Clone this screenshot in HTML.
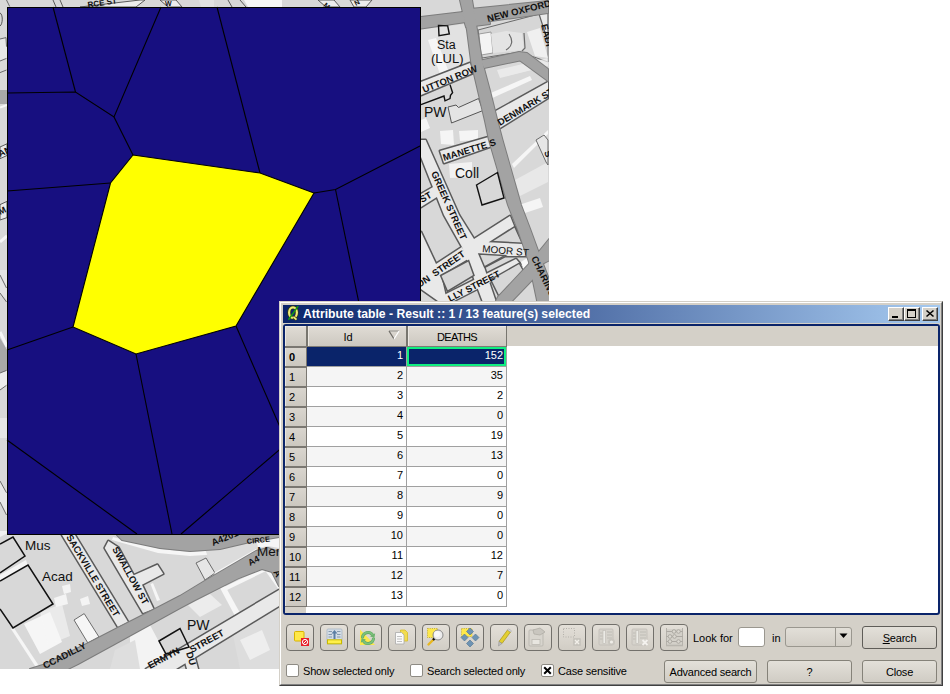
<!DOCTYPE html>
<html><head><meta charset="utf-8">
<style>
html,body{margin:0;padding:0;width:950px;height:694px;overflow:hidden;background:#fff;font-family:"Liberation Sans",sans-serif;}
.a{position:absolute;}
#dlg{position:absolute;left:279px;top:301px;width:664px;height:385px;background:#d4d0c8;box-sizing:border-box;
 border-top:1px solid #d4d0c8;border-left:1px solid #d4d0c8;border-right:1px solid #404040;border-bottom:1px solid #404040;}
#dlg .in{position:absolute;left:0;top:0;right:0;bottom:0;border-top:1px solid #fff;border-left:1px solid #fff;border-right:1px solid #808080;border-bottom:1px solid #808080;}
.title{position:absolute;left:283px;top:305px;width:657px;height:18px;background:linear-gradient(to right,#0a246a,#a6caf0);}
.ttext{position:absolute;left:303px;top:306px;color:#fff;font-weight:bold;font-size:12.2px;line-height:16px;white-space:nowrap;}
.cb{position:absolute;top:307px;width:16px;height:14px;box-sizing:border-box;background:#d4d0c8;
 border-top:1px solid #fff;border-left:1px solid #fff;border-right:1px solid #404040;border-bottom:1px solid #404040;box-shadow:inset -1px -1px 0 #808080;}
.frame{position:absolute;left:283px;top:324px;width:657px;height:291px;box-sizing:border-box;border:2px solid #0a246a;background:#fff;border-radius:3px;}
.hd{position:absolute;top:326px;height:20px;box-sizing:border-box;background:linear-gradient(#dfdbd4,#ccc8c0);border-top:1px solid #ece9e3;border-left:1px solid #ece9e3;}
.ht{position:absolute;top:331px;font-size:11px;line-height:13px;color:#000;text-align:center;white-space:nowrap;}
.rh{position:absolute;left:285px;width:21px;box-sizing:border-box;background:linear-gradient(#d9d5ce,#cbc7bf);border-left:1px solid #e8e5df;border-top:1px solid #e0ddd6;}
.rn{position:absolute;left:289px;font-size:11px;line-height:13px;color:#000;white-space:nowrap;}
.cell{position:absolute;height:19px;}
.num{position:absolute;font-size:11px;line-height:13px;text-align:right;color:#000;white-space:nowrap;}
.tb{position:absolute;top:624px;width:28px;height:27px;box-sizing:border-box;border:1.5px solid #72706b;border-radius:4px;background:linear-gradient(#e3dfd8,#d1cdc5);}
.lbl{position:absolute;font-size:11px;line-height:13px;color:#000;white-space:nowrap;letter-spacing:-0.2px;}
.chk{position:absolute;top:664px;width:13px;height:13px;box-sizing:border-box;border:1px solid #8e8b84;border-radius:2px;background:#fff;}
.btn{position:absolute;box-sizing:border-box;border:1px solid #858279;border-radius:3px;background:linear-gradient(#e3e0d9,#d0ccc4);font-size:11px;text-align:center;color:#000;letter-spacing:-0.2px;white-space:nowrap;}
</style></head><body>
<svg class="a" style="left:0;top:0" width="549" height="669" viewBox="0 0 549 669">
<rect x="0" y="0" width="549" height="669" fill="#d8d8d8"/>
<!-- top strip details -->
<path d="M53 0 L56 7 M60 0 L63 7" stroke="#5a5a5a" stroke-width="1"/>
<path d="M80 7 L140 0 L145 0 L136 7 Z" fill="#ececec" stroke="#5a5a5a" stroke-width="1"/>
<text x="88" y="7.5" font-family="Liberation Sans" font-size="8" font-weight="bold" fill="#111" transform="rotate(-8 88 7.5)">RCE ST</text>
<path d="M160 0 L176 0 L182 7 L168 7 Z" fill="#ececec" stroke="#5a5a5a" stroke-width="1"/>
<text x="165" y="6" font-family="Liberation Sans" font-size="7" font-weight="bold" fill="#111">W</text>
<path d="M199 0 H214 V7 H201 Z" fill="#e2e2e2"/>
<path d="M228 0 L232 7 M240 0 L246 7" stroke="#5a5a5a" stroke-width="1"/>
<path d="M244 0 H282 V7 H248 Z" fill="#f6f6f6"/>
<path d="M318 0 L334 0 L340 7 L326 7 Z" fill="#ececec" stroke="#5a5a5a" stroke-width="1"/>
<path d="M350 0 L372 0 L366 7 L354 7 Z" fill="#ececec" stroke="#5a5a5a" stroke-width="1"/>
<text x="323" y="6" font-family="Liberation Sans" font-size="7" font-weight="bold" fill="#111" transform="rotate(40 323 6)">M</text>
<text x="356" y="6" font-family="Liberation Sans" font-size="7" font-weight="bold" fill="#111" transform="rotate(-30 356 6)">N</text>
<!-- left strip -->
<path d="M0 39 L6 37.6 L7 47 L7 58.4 L0 61 Z" fill="#e6e6e6"/>
<path d="M0 39 L6 37.6 L6.5 46.7 M0 61 L6.5 58.4 M0 72.6 L6.5 70 M6.5 0 L9.7 6.5" fill="none" stroke="#6a6a6a" stroke-width="1"/>
<path d="M0 13 C3 14 3 24 0 26" fill="none" stroke="#555" stroke-width="1"/>
<path d="M0 90 H7 V104 H0 Z" fill="#a8a8a8"/>
<path d="M0 107.5 L7 105" stroke="#f6f6f6" stroke-width="2"/>
<path d="M0 147 L7 143.8 L7 155.5 L0 158.7 Z" fill="#ececec" stroke="#5a5a5a" stroke-width="1"/>
<text x="0" y="157" font-family="Liberation Sans" font-size="9" font-weight="bold" fill="#111" transform="rotate(-25 0 157)">AN</text>
<path d="M0 204.6 L7 201.4 L7 217.6 L0 220 Z" fill="#ececec" stroke="#5a5a5a" stroke-width="1"/>
<text x="0" y="215" font-family="Liberation Sans" font-size="9" font-weight="bold" fill="#111" transform="rotate(-25 0 215)">M</text>
<path d="M0 242 L7 235.8" stroke="#f6f6f6" stroke-width="3"/>
<path d="M0 270 H7 V300 L0 293 Z" fill="#e4e4e4"/>
<path d="M0 275 L6.5 288 M0 293 L6.5 302" stroke="#6a6a6a" stroke-width="1"/>
<path d="M0 332 L7 346.5" stroke="#f6f6f6" stroke-width="3"/>
<path d="M0 338 L7 350 L7 372 L0 373 Z" fill="#a8a8a8"/>
<path d="M0 373 L7 370.4 L7 385.3 L0 390 Z" fill="#ececec"/>
<path d="M0 373 L6.5 370.4 M0 390 L6.5 385.3" stroke="#6a6a6a" stroke-width="1"/>
<path d="M0 418 H7 V438 H0 Z" fill="#e6e6e6"/>
<path d="M0 481 L7 493 L7 515 L0 502 Z" fill="#e8e8e8"/>
<path d="M0 481 L6.5 492.8 M0 502 L6.5 515" stroke="#6a6a6a" stroke-width="1"/>
<!-- ===== Region C (right of voronoi) ===== -->
<!-- light patches -->
<path d="M440 27 L466 24 L471 62 L421 84 L421 30 Z" fill="#e2e2e2"/>
<path d="M428 40 L436 38 L448 70 L440 74 Z" fill="#f6f6f6"/>
<path d="M478 30 L543 13 L548 30 L548 62 L520 52 L482 58 Z" fill="#d6d6d6" stroke="#6a6a6a" stroke-width="1"/>
<path d="M479 34 L491 32 L493 53 L481 55 Z" fill="#f4f4f4" stroke="#8a8a8a" stroke-width="0.8"/>
<path d="M491 34 L506 31 L522 33 L524 50 L493 53 Z" fill="#e4e4e4"/>
<path d="M509 34 C 513 40 513 46 506 50" fill="none" stroke="#6a6a6a" stroke-width="1.2"/>
<path d="M524 33 L525 48 L522 51" fill="none" stroke="#6a6a6a" stroke-width="1.2"/>
<path d="M527 32 L540 28 L548 58 L535 56 Z" fill="#f0f0f0"/>
<path d="M539 14 L548 12 L548 42 Z" fill="#e9e9e9" stroke="#606060" stroke-width="1.2"/>
<path d="M497 70 L548 58 L548 66 L500 78 Z" fill="#f2f2f2" opacity="0.7"/>
<path d="M486 95 L530 76 L532 80 L488 100 Z" fill="#f6f6f6"/>
<!-- PW building -->
<path d="M448 107 L456 105 L458.5 107.5 L478.5 98.5 L483 110.5 L451.5 123 Z" fill="#e4e4e4" stroke="#555" stroke-width="1"/>
<path d="M421 104.6 L444 96 L445 100.8 L450 98.6 L450.5 95.4 L452.6 92.7 L450 84.6" fill="none" stroke="#111" stroke-width="1.4"/>
<path d="M440 131 L453 130 L454 145 L441 144 Z M459 131 L478 130 L478 140 L460 141 Z" fill="#f5f5f5"/>
<path d="M421 120 L426 118 L430 128 L421 132 Z" fill="#f5f5f5"/>
<path d="M449 164 L472 162 L472 177 L450 178 Z" fill="#f2f2f2"/>
<path d="M512 164 L548 130 L548 134 L514 168 Z" fill="#f6f6f6"/>
<path d="M515 180 L548 162 L548 182 L520 196 Z" fill="#e8e8e8"/>
<path d="M519 205 L540 198 L543 207 L522 214 Z" fill="#f5f5f5"/>
<path d="M536 140 L544 135 L548 140 L548 165 L546 162 Z" fill="#e6e6e6" stroke="#6a6a6a" stroke-width="1"/>

<!-- minor streets (light with outline) -->
<g fill="#5a5a5a" stroke="#5a5a5a" stroke-width="3" stroke-linejoin="round">
<path d="M421 82 L470 63 L473 73 L421 95 Z"/>
<path d="M494 112 L548 82 L548 98 L500 128 Z"/>
<path d="M440 151 L492 136 L495 145 L444 163 Z"/>
<path d="M421 140 L425.6 140 L459 215 L474 239 L510 216 L514 226 L525 244 L527 256 L505 256 L484 267 L497 305 L484 305 L462 247 L444 215 L421 157 Z"/>
<path d="M421 194 L434 186.5 L438.5 196 L421 207 Z"/>
<path d="M421 232 L436 264 L462 247 L468 259 L441 275 L447 301 L438 301 L421 289 Z"/>
<path d="M438 298 L516 259 L522 266 L446 305 L438 305 Z"/>
</g><g fill="#e9e9e9" stroke="none">
<path d="M421 82 L470 63 L473 73 L421 95 Z"/>
<path d="M494 112 L548 82 L548 98 L500 128 Z"/>
<path d="M440 151 L492 136 L495 145 L444 163 Z"/>
<path d="M421 140 L425.6 140 L459 215 L474 239 L510 216 L514 226 L525 244 L527 256 L505 256 L484 267 L497 305 L484 305 L462 247 L444 215 L421 157 Z"/>
<path d="M421 194 L434 186.5 L438.5 196 L421 207 Z"/>
<path d="M421 232 L436 264 L462 247 L468 259 L441 275 L447 301 L438 301 L421 289 Z"/>
<path d="M438 298 L516 259 L522 266 L446 305 L438 305 Z"/>
</g>
<g fill="#d8d8d8" stroke="#5a5a5a" stroke-width="1.5">
<path d="M491 241.6 L514.7 226.5 L522.3 243.2 Z"/>
<path d="M479 254 L505 255.6 L484.5 267 Z"/>
<path d="M440.6 275.5 L468.6 260.5 L474 275.5 L447.4 291.3 Z"/>
<path d="M490.5 279.6 L519.3 263.2 L526 275 L498.7 296 Z"/>
</g>
<path d="M521 262 L530 256 L533 268 L524 272 Z" fill="#f8f8f8"/>
<!-- main grey roads -->
<g fill="#7c7c7c" stroke="#7c7c7c" stroke-width="2" stroke-linejoin="round">
<path d="M421 17 L463 12 L466 22 L421 28.5 Z"/>
<path d="M470 9 L548 1 L548 13 L484 22 Z"/>
<path d="M462 12 L488 12 L490 24 L466 27 Z"/>
<path d="M481 60.5 L519 52 L527 53 L548 69 L548 81 L520 60.5 L484 68 Z"/>
<path d="M460 0 L467 30 L471 61 L478 91 L485 121 L489 140 L508 205 L518 230 L529 262 L538 305 L550 305 L550 282 L540 256 L530.5 230 L521 205 L502.5 140 L497.5 121 L490 91 L482 61 L477 30 L472 0 Z"/>
<path d="M494 305 L498 297 L529 264 L537 254 L550 238 L550 260 L540 265 L535 277 L511 302 L508 305 Z"/>
</g><g fill="#a3a3a3" stroke="none">
<path d="M421 17 L463 12 L466 22 L421 28.5 Z"/>
<path d="M470 9 L548 1 L548 13 L484 22 Z"/>
<path d="M462 12 L488 12 L490 24 L466 27 Z"/>
<path d="M481 60.5 L519 52 L527 53 L548 69 L548 81 L520 60.5 L484 68 Z"/>
<path d="M460 0 L467 30 L471 61 L478 91 L485 121 L489 140 L508 205 L518 230 L529 262 L538 305 L550 305 L550 282 L540 256 L530.5 230 L521 205 L502.5 140 L497.5 121 L490 91 L482 61 L477 30 L472 0 Z"/>
<path d="M494 305 L498 297 L529 264 L537 254 L550 238 L550 260 L540 265 L535 277 L511 302 L508 305 Z"/>
</g>
<!-- building outlines -->
<g fill="none" stroke="#111" stroke-width="1.4">
<path d="M438.5 25.4 L447.7 25.9 L449.3 34 L439 35.6 Z"/>
<path d="M476.5 185 L497.5 172.5 L504 198 L482 205 Z"/>
</g>
<!-- labels C -->
<g font-family="Liberation Sans" fill="#111">
<text x="437" y="49" font-size="12.5">Sta</text>
<text x="431" y="63" font-size="13">(LUL)</text>
<text x="424" y="116.5" font-size="14">PW</text>
<text x="455" y="178" font-size="14">Coll</text>
<text x="482" y="252" font-size="10" transform="rotate(5 482 252)">MOOR ST</text>
</g>
<g font-family="Liberation Sans" fill="#111" font-size="9.5" font-weight="bold">
<text x="488" y="22" transform="rotate(-14 488 22)">NEW  OXFORD</text>
<text x="424" y="93" transform="rotate(-22 424 93)">UTTON ROW</text>
<text x="500" y="126" transform="rotate(-31 500 126)">DENMARK ST</text>
<text x="444" y="161" transform="rotate(-17 444 161)">MANETTE S</text>
<text x="431" y="173" transform="rotate(66 431 173)">GREEK STREET</text>
<text x="422" y="203" transform="rotate(-30 422 203)">ST</text>
<text x="435" y="277" transform="rotate(-35 435 277)">STREET</text>
<text x="419" y="288" transform="rotate(-33 419 288)">ON</text>
<text x="450" y="302" transform="rotate(-27 450 302)">LLY STREET</text>
<text x="531" y="258" transform="rotate(64 531 258)">CHARING</text>
<text x="544" y="152" transform="rotate(70 544 152)">S</text>
<text x="541" y="25" transform="rotate(76 541 25)">EADI</text>
</g>

<!-- ===== Region D (below voronoi) ===== -->
<path d="M0 535 H279 V669 H0 Z" fill="#d8d8d8"/>
<!-- white/light patches -->
<path d="M24 624 L50 612 L62 642 L40 654 Z" fill="#f6f6f6"/>
<path d="M40 612 L62 604 L70 636 L48 645 Z" fill="#f6f6f6" opacity="0.6"/>
<path d="M54 598 L66 594 L68 604 L56 607 Z M62 586 L70 584 L71 592 L64 594 Z M80 599 L88 596 L90 604 L82 606 Z" fill="#f4f4f4"/>
<path d="M74 620 L84.2 613.6 L99 637 L87.9 643 Z" fill="#f6f6f6" stroke="#6c6c6c" stroke-width="1"/>
<path d="M0 575 L26 560 L28 566 L0 581 Z" fill="#f4f4f4"/>
<path d="M11 629 L14 628 L41 669 L37 669 Z" fill="#f6f6f6"/>
<path d="M0 531 L12 531 L0 537 Z" fill="#f0f0f0"/>
<!-- curve band white -->
<path d="M113 537 L160 549 L190 552 L220 550 L250 543 L279 538 L279 542 L250 547 L220 554 L190 556 L158 553 L112 540 Z" fill="#f6f6f6"/>
<path d="M205 549 L254 535 L262 549 L214 573 Z" fill="#dcdcdc"/>
<path d="M196 563 L206 558 L215 573 L205 580 Z" fill="#e6e6e6" stroke="#6c6c6c" stroke-width="1"/>
<path d="M256 536 L279 535 L279 548 L268 546 L258 548 Z" fill="#f6f6f6"/>
<path d="M214 573 L256 549 L258 551 L216 576 Z" fill="#f6f6f6"/>
<path d="M222 588 L264 568 L266 571 L225 591 Z" fill="#f6f6f6"/>
<path d="M219 586 L224 584 L240 613 L235 616 Z" fill="#f6f6f6"/>
<path d="M264 569 L268 568 L279 585 L279 590 Z" fill="#f6f6f6"/>
<path d="M130 636 L150 625 L158 640 L165 654 L175 669 L130 669 Z" fill="#f3f3f3"/>
<path d="M115 650 L135 640 L140 669 L110 669 Z" fill="#dedede"/>
<path d="M230 620 L279 596 L279 669 L240 669 Z" fill="#dddddd"/>
<path d="M240 640 L262 630 L270 650 L250 660 Z" fill="#eeeeee"/>
<path d="M188 605 L210 594 L222 605 L200 617 Z" fill="#ececec"/>
<!-- light streets D -->
<g fill="#5a5a5a" stroke="#5a5a5a" stroke-width="3" stroke-linejoin="round">
<path d="M62 535 L75 535 L128 622 L118 627 Z"/>
<path d="M104.7 548 L108.4 541 L118.4 547.4 L133.7 575.3 L157.4 564.7 L163.2 573.7 L142 584.7 L153.5 609 L143 613 Z"/>
<path d="M146 669 L279 590 L279 606 L176 669 Z"/>
<path d="M182 651 L192 647 L198 669 L187 669 Z"/>
</g><g fill="#e9e9e9" stroke="none">
<path d="M62 535 L75 535 L128 622 L118 627 Z"/>
<path d="M104.7 548 L108.4 541 L118.4 547.4 L133.7 575.3 L157.4 564.7 L163.2 573.7 L142 584.7 L153.5 609 L143 613 Z"/>
<path d="M146 669 L279 590 L279 606 L176 669 Z"/>
<path d="M182 651 L192 647 L198 669 L187 669 Z"/>
</g>
<path d="M150.5 584 L153 583 L160 600 L157 601 Z" fill="#f6f6f6"/>
<!-- grey roads D -->
<g fill="#7c7c7c" stroke="#7c7c7c" stroke-width="2" stroke-linejoin="round">
<path d="M30 669 L46 664 L88.6 643 L119.6 627 L155 609 L180 596 L203 582 L256 551 L268 548 L279 552 L279 586 L272 572 L262 569 L238 578.4 L195 600 L180 608 L113.7 644.5 L78 664 L68 669 Z"/>
<path d="M117 535 L279 535 L279 537 L250 542 L220 549 L190 551 L160 548 L122 540 Z"/>
</g><g fill="#a3a3a3" stroke="none">
<path d="M30 669 L46 664 L88.6 643 L119.6 627 L155 609 L180 596 L203 582 L256 551 L268 548 L279 552 L279 586 L272 572 L262 569 L238 578.4 L195 600 L180 608 L113.7 644.5 L78 664 L68 669 Z"/>
<path d="M117 535 L279 535 L279 537 L250 542 L220 549 L190 551 L160 548 L122 540 Z"/>
</g>
<!-- building outlines D -->
<g fill="none" stroke="#111" stroke-width="1.5">
<path d="M0 544 L13 537 L25 556 L0 573"/>
<path d="M0 581 L28 565 L53 604 L13 628 L0 609"/>
<path d="M159 641 L180 628.5 L189 647 L166 654 Z"/>
</g>
<g font-family="Liberation Sans" fill="#111">
<text x="25" y="549.5" font-size="13.5">Mus</text>
<text x="42" y="581" font-size="13.5">Acad</text>
<text x="187" y="630" font-size="14">PW</text>
<text x="257" y="556" font-size="13.5">Mer</text>
</g>
<g font-family="Liberation Sans" fill="#111" font-size="9.5" font-weight="bold">
<text x="66" y="537" transform="rotate(59 66 537)">SACKVILLE STREET</text>
<text x="112" y="549" transform="rotate(61 112 549)">SWALLOW ST</text>
<text x="45" y="669" transform="rotate(-27 45 669)">CCADILLY</text>
<text x="150" y="669" transform="rotate(-28 150 669)">ERMYN</text>
<text x="194" y="631" transform="rotate(-28 194 631)" dy="0"></text>
<text x="192" y="653" transform="rotate(-29 192 653)">STREET</text>
<text x="186" y="653" transform="rotate(72 186 653)">DU</text>
<text x="213" y="546" transform="rotate(-22 213 546)">A4201</text>
<text x="247" y="544" font-size="7.5" transform="rotate(-6 247 544)">CIRCE</text>
<text x="250" y="566" font-size="9" transform="rotate(-28 250 566)">A4</text>
<text x="273" y="572" transform="rotate(60 273 572)">A</text>
</g>

</svg>
<svg class="a" style="left:0;top:0" width="430" height="545" viewBox="0 0 430 545">
<rect x="7.5" y="7.5" width="413" height="527" fill="#170f80" stroke="#000" stroke-width="1"/>
<g stroke="#000" stroke-width="1.1" fill="none">
<polyline points="53,7 75.5,92"/>
<polyline points="7,93 75.5,92 114,117 161,7"/>
<polyline points="114,117 133,155"/>
<polyline points="7,191 110.5,183"/>
<polyline points="217,7 260,173"/>
<polyline points="314,193 335.5,189.5 420,146"/>
<polyline points="335.5,189.5 380,405"/>
<polyline points="73,327 7,350"/>
<polyline points="136,354 172,534"/>
<polyline points="7,440 137,534"/>
<polyline points="181,534 420,329.6"/>
<polyline points="236,326 300,473"/>
</g>
<polygon points="133,155 260,173 314,193 236,326 136,354 73,327 110.5,183" fill="#ffff00" stroke="#000" stroke-width="1.1"/>
</svg>
<div id="dlg"><div class="in"></div></div>
<div class="title"></div>
<svg class="a" style="left:287px;top:305px" width="14" height="16" viewBox="0 0 14 16">
<ellipse cx="6" cy="7.6" rx="3.9" ry="5.3" fill="none" stroke="#3a3a08" stroke-width="3.4"/>
<ellipse cx="6" cy="7.6" rx="3.9" ry="5.3" fill="none" stroke="#ecec7a" stroke-width="2.2"/>
<path d="M6.5 12 L9.5 14.6" stroke="#3a3a08" stroke-width="3"/>
<path d="M6.5 12 L9.5 14.6" stroke="#ecec7a" stroke-width="1.8"/>
<path d="M1.8 14.2 L10.8 1.6" stroke="#159a10" stroke-width="1.5" stroke-linecap="round"/>
</svg>
<div class="ttext">Attribute table - Result :: 1 / 13 feature(s) selected</div>
<div class="cb" style="left:888px"></div><div class="cb" style="left:904px"></div><div class="cb" style="left:922px"></div>
<div class="a" style="left:892px;top:316px;width:6px;height:2px;background:#000"></div>
<div class="a" style="left:907px;top:309px;width:9px;height:9px;box-sizing:border-box;border:1px solid #000;border-top-width:2px"></div>
<svg class="a" style="left:925px;top:309px" width="10" height="9" viewBox="0 0 10 9"><path d="M1.5 1.5 L8.5 7.5 M8.5 1.5 L1.5 7.5" stroke="#000" stroke-width="1.6"/></svg>
<div class="frame"></div>
<div class="hd" style="left:285px;width:21px"></div>
<div class="a" style="left:306px;top:326px;width:2px;height:21px;background:#78766f"></div>
<div class="hd" style="left:308px;width:98px"></div>
<div class="a" style="left:406px;top:326px;width:2px;height:21px;background:#78766f"></div>
<div class="hd" style="left:408px;width:98px"></div>
<div class="a" style="left:506px;top:326px;width:1px;height:21px;background:#78766f"></div>
<div class="a" style="left:507px;top:326px;width:431px;height:20px;background:#d4d0c8"></div>
<div class="a" style="left:285px;top:346px;width:221px;height:1px;background:#7e7b75"></div>
<div class="ht" style="left:308px;width:80px">Id</div>
<svg class="a" style="left:388px;top:330px" width="12" height="10" viewBox="0 0 12 10"><path d="M1 1 H11" stroke="#a3a19c" stroke-width="1.3"/><path d="M1 1 L6 9" stroke="#6d6b66" stroke-width="1.2"/><path d="M11 1 L6 9" stroke="#ffffff" stroke-width="1.2"/></svg>
<div class="ht" style="left:408px;width:98px;letter-spacing:-0.6px">DEATHS</div>
<div class="rh" style="top:347px;height:20px"></div><div class="cell" style="left:307px;top:347px;width:99px;background:#0a246a"></div><div class="cell" style="left:407px;top:347px;width:99px;background:#0a246a"></div><div class="rh" style="top:367px;height:20px"></div><div class="cell" style="left:307px;top:367px;width:99px;background:#f5f5f5"></div><div class="cell" style="left:407px;top:367px;width:99px;background:#f5f5f5"></div><div class="rh" style="top:387px;height:20px"></div><div class="cell" style="left:307px;top:387px;width:99px;background:#ffffff"></div><div class="cell" style="left:407px;top:387px;width:99px;background:#ffffff"></div><div class="rh" style="top:407px;height:20px"></div><div class="cell" style="left:307px;top:407px;width:99px;background:#f5f5f5"></div><div class="cell" style="left:407px;top:407px;width:99px;background:#f5f5f5"></div><div class="rh" style="top:427px;height:20px"></div><div class="cell" style="left:307px;top:427px;width:99px;background:#ffffff"></div><div class="cell" style="left:407px;top:427px;width:99px;background:#ffffff"></div><div class="rh" style="top:447px;height:20px"></div><div class="cell" style="left:307px;top:447px;width:99px;background:#f5f5f5"></div><div class="cell" style="left:407px;top:447px;width:99px;background:#f5f5f5"></div><div class="rh" style="top:467px;height:20px"></div><div class="cell" style="left:307px;top:467px;width:99px;background:#ffffff"></div><div class="cell" style="left:407px;top:467px;width:99px;background:#ffffff"></div><div class="rh" style="top:487px;height:20px"></div><div class="cell" style="left:307px;top:487px;width:99px;background:#f5f5f5"></div><div class="cell" style="left:407px;top:487px;width:99px;background:#f5f5f5"></div><div class="rh" style="top:507px;height:20px"></div><div class="cell" style="left:307px;top:507px;width:99px;background:#ffffff"></div><div class="cell" style="left:407px;top:507px;width:99px;background:#ffffff"></div><div class="rh" style="top:527px;height:20px"></div><div class="cell" style="left:307px;top:527px;width:99px;background:#f5f5f5"></div><div class="cell" style="left:407px;top:527px;width:99px;background:#f5f5f5"></div><div class="rh" style="top:547px;height:20px"></div><div class="cell" style="left:307px;top:547px;width:99px;background:#ffffff"></div><div class="cell" style="left:407px;top:547px;width:99px;background:#ffffff"></div><div class="rh" style="top:567px;height:20px"></div><div class="cell" style="left:307px;top:567px;width:99px;background:#f5f5f5"></div><div class="cell" style="left:407px;top:567px;width:99px;background:#f5f5f5"></div><div class="rh" style="top:587px;height:20px"></div><div class="cell" style="left:307px;top:587px;width:99px;background:#ffffff"></div><div class="cell" style="left:407px;top:587px;width:99px;background:#ffffff"></div><div class="a" style="left:285px;top:346px;width:21px;height:2px;background:#7a7771"></div><div class="a" style="left:306px;top:347px;width:1px;height:20px;background:#7a7771"></div><div class="a" style="left:307px;top:366px;width:200px;height:1px;background:#a0a0a0"></div><div class="a" style="left:406px;top:347px;width:1px;height:20px;background:#a0a0a0"></div><div class="a" style="left:506px;top:347px;width:1px;height:20px;background:#a0a0a0"></div><div class="rn" style="top:351px;font-weight:bold;">0</div><div class="num" style="left:306px;top:349px;width:97px;color:#fff">1</div><div class="num" style="left:406px;top:349px;width:97px;color:#fff">152</div>
<div class="a" style="left:285px;top:366px;width:21px;height:2px;background:#7a7771"></div><div class="a" style="left:306px;top:367px;width:1px;height:20px;background:#7a7771"></div><div class="a" style="left:307px;top:386px;width:200px;height:1px;background:#a0a0a0"></div><div class="a" style="left:406px;top:367px;width:1px;height:20px;background:#a0a0a0"></div><div class="a" style="left:506px;top:367px;width:1px;height:20px;background:#a0a0a0"></div><div class="rn" style="top:371px;">1</div><div class="num" style="left:306px;top:369px;width:97px;color:#000">2</div><div class="num" style="left:406px;top:369px;width:97px;color:#000">35</div>
<div class="a" style="left:285px;top:386px;width:21px;height:2px;background:#7a7771"></div><div class="a" style="left:306px;top:387px;width:1px;height:20px;background:#7a7771"></div><div class="a" style="left:307px;top:406px;width:200px;height:1px;background:#a0a0a0"></div><div class="a" style="left:406px;top:387px;width:1px;height:20px;background:#a0a0a0"></div><div class="a" style="left:506px;top:387px;width:1px;height:20px;background:#a0a0a0"></div><div class="rn" style="top:391px;">2</div><div class="num" style="left:306px;top:389px;width:97px;color:#000">3</div><div class="num" style="left:406px;top:389px;width:97px;color:#000">2</div>
<div class="a" style="left:285px;top:406px;width:21px;height:2px;background:#7a7771"></div><div class="a" style="left:306px;top:407px;width:1px;height:20px;background:#7a7771"></div><div class="a" style="left:307px;top:426px;width:200px;height:1px;background:#a0a0a0"></div><div class="a" style="left:406px;top:407px;width:1px;height:20px;background:#a0a0a0"></div><div class="a" style="left:506px;top:407px;width:1px;height:20px;background:#a0a0a0"></div><div class="rn" style="top:411px;">3</div><div class="num" style="left:306px;top:409px;width:97px;color:#000">4</div><div class="num" style="left:406px;top:409px;width:97px;color:#000">0</div>
<div class="a" style="left:285px;top:426px;width:21px;height:2px;background:#7a7771"></div><div class="a" style="left:306px;top:427px;width:1px;height:20px;background:#7a7771"></div><div class="a" style="left:307px;top:446px;width:200px;height:1px;background:#a0a0a0"></div><div class="a" style="left:406px;top:427px;width:1px;height:20px;background:#a0a0a0"></div><div class="a" style="left:506px;top:427px;width:1px;height:20px;background:#a0a0a0"></div><div class="rn" style="top:431px;">4</div><div class="num" style="left:306px;top:429px;width:97px;color:#000">5</div><div class="num" style="left:406px;top:429px;width:97px;color:#000">19</div>
<div class="a" style="left:285px;top:446px;width:21px;height:2px;background:#7a7771"></div><div class="a" style="left:306px;top:447px;width:1px;height:20px;background:#7a7771"></div><div class="a" style="left:307px;top:466px;width:200px;height:1px;background:#a0a0a0"></div><div class="a" style="left:406px;top:447px;width:1px;height:20px;background:#a0a0a0"></div><div class="a" style="left:506px;top:447px;width:1px;height:20px;background:#a0a0a0"></div><div class="rn" style="top:451px;">5</div><div class="num" style="left:306px;top:449px;width:97px;color:#000">6</div><div class="num" style="left:406px;top:449px;width:97px;color:#000">13</div>
<div class="a" style="left:285px;top:466px;width:21px;height:2px;background:#7a7771"></div><div class="a" style="left:306px;top:467px;width:1px;height:20px;background:#7a7771"></div><div class="a" style="left:307px;top:486px;width:200px;height:1px;background:#a0a0a0"></div><div class="a" style="left:406px;top:467px;width:1px;height:20px;background:#a0a0a0"></div><div class="a" style="left:506px;top:467px;width:1px;height:20px;background:#a0a0a0"></div><div class="rn" style="top:471px;">6</div><div class="num" style="left:306px;top:469px;width:97px;color:#000">7</div><div class="num" style="left:406px;top:469px;width:97px;color:#000">0</div>
<div class="a" style="left:285px;top:486px;width:21px;height:2px;background:#7a7771"></div><div class="a" style="left:306px;top:487px;width:1px;height:20px;background:#7a7771"></div><div class="a" style="left:307px;top:506px;width:200px;height:1px;background:#a0a0a0"></div><div class="a" style="left:406px;top:487px;width:1px;height:20px;background:#a0a0a0"></div><div class="a" style="left:506px;top:487px;width:1px;height:20px;background:#a0a0a0"></div><div class="rn" style="top:491px;">7</div><div class="num" style="left:306px;top:489px;width:97px;color:#000">8</div><div class="num" style="left:406px;top:489px;width:97px;color:#000">9</div>
<div class="a" style="left:285px;top:506px;width:21px;height:2px;background:#7a7771"></div><div class="a" style="left:306px;top:507px;width:1px;height:20px;background:#7a7771"></div><div class="a" style="left:307px;top:526px;width:200px;height:1px;background:#a0a0a0"></div><div class="a" style="left:406px;top:507px;width:1px;height:20px;background:#a0a0a0"></div><div class="a" style="left:506px;top:507px;width:1px;height:20px;background:#a0a0a0"></div><div class="rn" style="top:511px;">8</div><div class="num" style="left:306px;top:509px;width:97px;color:#000">9</div><div class="num" style="left:406px;top:509px;width:97px;color:#000">0</div>
<div class="a" style="left:285px;top:526px;width:21px;height:2px;background:#7a7771"></div><div class="a" style="left:306px;top:527px;width:1px;height:20px;background:#7a7771"></div><div class="a" style="left:307px;top:546px;width:200px;height:1px;background:#a0a0a0"></div><div class="a" style="left:406px;top:527px;width:1px;height:20px;background:#a0a0a0"></div><div class="a" style="left:506px;top:527px;width:1px;height:20px;background:#a0a0a0"></div><div class="rn" style="top:531px;">9</div><div class="num" style="left:306px;top:529px;width:97px;color:#000">10</div><div class="num" style="left:406px;top:529px;width:97px;color:#000">0</div>
<div class="a" style="left:285px;top:546px;width:21px;height:2px;background:#7a7771"></div><div class="a" style="left:306px;top:547px;width:1px;height:20px;background:#7a7771"></div><div class="a" style="left:307px;top:566px;width:200px;height:1px;background:#a0a0a0"></div><div class="a" style="left:406px;top:547px;width:1px;height:20px;background:#a0a0a0"></div><div class="a" style="left:506px;top:547px;width:1px;height:20px;background:#a0a0a0"></div><div class="rn" style="top:551px;">10</div><div class="num" style="left:306px;top:549px;width:97px;color:#000">11</div><div class="num" style="left:406px;top:549px;width:97px;color:#000">12</div>
<div class="a" style="left:285px;top:566px;width:21px;height:2px;background:#7a7771"></div><div class="a" style="left:306px;top:567px;width:1px;height:20px;background:#7a7771"></div><div class="a" style="left:307px;top:586px;width:200px;height:1px;background:#a0a0a0"></div><div class="a" style="left:406px;top:567px;width:1px;height:20px;background:#a0a0a0"></div><div class="a" style="left:506px;top:567px;width:1px;height:20px;background:#a0a0a0"></div><div class="rn" style="top:571px;">11</div><div class="num" style="left:306px;top:569px;width:97px;color:#000">12</div><div class="num" style="left:406px;top:569px;width:97px;color:#000">7</div>
<div class="a" style="left:285px;top:586px;width:21px;height:2px;background:#7a7771"></div><div class="a" style="left:306px;top:587px;width:1px;height:20px;background:#7a7771"></div><div class="a" style="left:307px;top:606px;width:200px;height:1px;background:#a0a0a0"></div><div class="a" style="left:406px;top:587px;width:1px;height:20px;background:#a0a0a0"></div><div class="a" style="left:506px;top:587px;width:1px;height:20px;background:#a0a0a0"></div><div class="rn" style="top:591px;">12</div><div class="num" style="left:306px;top:589px;width:97px;color:#000">13</div><div class="num" style="left:406px;top:589px;width:97px;color:#000">0</div>
<div class="a" style="left:285px;top:606px;width:21px;height:2px;background:#7a7771"></div>
<div class="a" style="left:407px;top:347px;width:99px;height:19px;box-sizing:border-box;border:2px solid #10ee80"></div>
<div class="a" style="left:285px;top:607px;width:21px;height:6px;background:#d4d0c8"></div>
<div class="tb" style="left:286px"></div><div class="tb" style="left:320px"></div><div class="tb" style="left:354px"></div><div class="tb" style="left:388px"></div><div class="tb" style="left:422px"></div><div class="tb" style="left:456px"></div><div class="tb" style="left:490px"></div><div class="tb" style="left:524px"></div><div class="tb" style="left:558px"></div><div class="tb" style="left:592px"></div><div class="tb" style="left:626px"></div><div class="tb" style="left:660px"></div>
<svg class="a" style="left:286px;top:624px" width="28" height="27" viewBox="0 0 28 27">
<rect x="8.5" y="7.5" width="9.5" height="9.5" rx="1" fill="#ffe84a" stroke="#d9b400" stroke-width="1"/>
<rect x="15" y="14" width="8" height="8" fill="#e8202a"/>
<circle cx="19" cy="18" r="2.6" fill="none" stroke="#fff" stroke-width="1"/>
<path d="M17.2 19.8 L20.8 16.2" stroke="#fff" stroke-width="1"/>
</svg>
<svg class="a" style="left:320px;top:624px" width="28" height="27" viewBox="0 0 28 27">
<rect x="7" y="5" width="15" height="15" rx="1" fill="#d4dde6" stroke="#a7b6c4" stroke-width="0.8"/>
<path d="M8.5 7.5 H12 M17 7.5 H20.5 M8.5 10.5 H12 M17 10.5 H20.5 M8.5 13 H12 M17 13 H20.5" stroke="#7e93a8" stroke-width="0.9"/>
<path d="M14.5 6 L11.5 9.5 H13.5 V15 H15.5 V9.5 H17.5 Z" fill="#5c7fa3"/>
<rect x="7.5" y="15.8" width="14" height="4" fill="#fff04a" stroke="#c8b800" stroke-width="1"/>
</svg>
<svg class="a" style="left:354px;top:624px" width="28" height="27" viewBox="0 0 28 27">
<path d="M6 5.5 V21 H21 Z" fill="#fde84a"/>
<path d="M8.5 14 A5.5 5.5 0 0 1 18.76 11.25" fill="none" stroke="#5fa35f" stroke-width="3"/>
<path d="M8.5 14 A5.5 5.5 0 0 1 18.76 11.25" fill="none" stroke="#7cc27c" stroke-width="1.8"/>
<path d="M20.4 14.2 L21.2 9.2 L16 12.3 Z" fill="#6fb46f"/>
<path d="M19.5 14 A5.5 5.5 0 0 1 9.24 16.75" fill="none" stroke="#5fa35f" stroke-width="3"/>
<path d="M19.5 14 A5.5 5.5 0 0 1 9.24 16.75" fill="none" stroke="#7cc27c" stroke-width="1.8"/>
<path d="M7.6 13.8 L6.8 18.8 L12 15.7 Z" fill="#6fb46f"/>
</svg>
<svg class="a" style="left:388px;top:624px" width="28" height="27" viewBox="0 0 28 27">
<path d="M12.5 6 H17 L19.5 8.5 V17 H12.5 Z" fill="#f2dc50" stroke="#d6bd2a" stroke-width="0.8"/>
<path d="M7.5 8.5 H13.5 L16 11 V20 H7.5 Z" fill="#fafafa" stroke="#a9a9a9" stroke-width="0.8"/>
<path d="M9 12.5 H14 M9 15 H14 M9 17.5 H14" stroke="#a8a8a8" stroke-width="0.7"/>
</svg>
<svg class="a" style="left:422px;top:624px" width="28" height="27" viewBox="0 0 28 27">
<rect x="5.5" y="4.5" width="10" height="9" fill="#fde84a" stroke="#b49a00" stroke-width="0.7" stroke-dasharray="1,1.2"/>
<path d="M6.5 20.5 L11.5 15.5" stroke="#e8b820" stroke-width="2.4" stroke-linecap="round"/>
<path d="M11 16 L12.8 14.2" stroke="#111" stroke-width="2.4"/>
<circle cx="16" cy="11" r="5" fill="#ececec" stroke="#8a8a8a" stroke-width="1"/>
<circle cx="15" cy="10" r="3" fill="#f8f8f8"/>
</svg>
<svg class="a" style="left:456px;top:624px" width="28" height="27" viewBox="0 0 28 27">
<rect x="5.5" y="4.5" width="10.5" height="8" fill="#fde84a" stroke="#b49a00" stroke-width="0.7" stroke-dasharray="1,1.2"/>
<path d="M14 4 L17.5 7.5 L14 11 L10.5 7.5 Z M8.5 10 L12 13.5 L8.5 17 L5 13.5 Z M19.5 10 L23 13.5 L19.5 17 L16 13.5 Z M14 16 L17.5 19.5 L14 23 L10.5 19.5 Z" fill="#6d93b3" stroke="#4f7290" stroke-width="0.6"/>
</svg>
<svg class="a" style="left:490px;top:624px" width="28" height="27" viewBox="0 0 28 27">
<path d="M17.5 6 L20.5 8 L12 19.5 L9 17.5 Z" fill="#e3cf30" stroke="#a89418" stroke-width="0.7"/>
<path d="M17.5 6 L18.5 4.8 L21.5 6.8 L20.5 8 Z" fill="#dedede" stroke="#999" stroke-width="0.5"/>
<path d="M9 17.5 L12 19.5 L8.5 22 Z" fill="#c0c0c0" stroke="#8d8d8d" stroke-width="0.5"/>
</svg>
<svg class="a" style="left:524px;top:624px" width="28" height="27" viewBox="0 0 28 27">
<rect x="5" y="6" width="14" height="16" rx="1" fill="#d8d5ce" stroke="#bcb9b2" stroke-width="1"/>
<rect x="8" y="15.5" width="8" height="5" fill="#e8e6e0" stroke="#bcb9b2" stroke-width="0.8"/>
<path d="M9 6 L16 4 L21 8 L16 11 L10 10 Z" fill="#c9c6bf" stroke="#b0ada6" stroke-width="0.8"/>
</svg>
<svg class="a" style="left:558px;top:624px" width="28" height="27" viewBox="0 0 28 27">
<rect x="5.5" y="4.5" width="11" height="8.5" fill="none" stroke="#b4b1aa" stroke-width="1" stroke-dasharray="1,1.5"/>
<rect x="15" y="14" width="8" height="8" rx="1" fill="#c8c5be"/>
<path d="M17 16 L21 20 M21 16 L17 20" stroke="#f2f0ea" stroke-width="1.4"/>
</svg>
<svg class="a" style="left:592px;top:624px" width="28" height="27" viewBox="0 0 28 27">
<rect x="7" y="5" width="14" height="16" rx="1" fill="#d6d3cc" stroke="#c0bdb6" stroke-width="0.8"/>
<rect x="11" y="6.5" width="2.5" height="13" fill="#ecebe6" stroke="#bdbab3" stroke-width="0.6"/>
<path d="M8 9 H10.5 M8 12 H10.5 M8 15 H10.5 M15 8 H20 M15 11 H20 M15 14 H20" stroke="#bdbab3" stroke-width="0.9"/>
<circle cx="19.5" cy="18" r="3.5" fill="#c9c6bf"/>
<circle cx="19.5" cy="18" r="1.6" fill="#efede8"/>
</svg>
<svg class="a" style="left:626px;top:624px" width="28" height="27" viewBox="0 0 28 27">
<rect x="6" y="5" width="15" height="16" rx="1" fill="#d6d3cc" stroke="#c0bdb6" stroke-width="0.8"/>
<rect x="10" y="6.5" width="2.5" height="13" fill="#ecebe6" stroke="#bdbab3" stroke-width="0.6"/>
<path d="M7 9 H9.5 M7 12 H9.5 M7 15 H9.5 M14 8 H20 M14 11 H20 M14 14 H20" stroke="#bdbab3" stroke-width="0.9"/>
<path d="M16.5 16 L21.5 21 M21.5 16 L16.5 21" stroke="#f4f2ee" stroke-width="1.8"/>
</svg>
<svg class="a" style="left:660px;top:624px" width="28" height="27" viewBox="0 0 28 27">
<rect x="6" y="5" width="17" height="17" fill="#d3d0c9"/>
<path d="M6.5 4 V22 M22.5 4 V22" stroke="#b5b2ab" stroke-width="1"/>
<path d="M6 21.5 H23" stroke="#b9b6af" stroke-width="1.6"/>
<path d="M6.5 7.5 H22.5 M6.5 12.5 H22.5 M6.5 17.5 H22.5" stroke="#a8a59e" stroke-width="0.9"/>
<g fill="#dcd9d2" stroke="#a8a59e" stroke-width="0.9"><circle cx="14" cy="7.5" r="1.8"/><circle cx="18.5" cy="7.5" r="1.8"/><circle cx="10" cy="12.5" r="1.8"/><circle cx="14.5" cy="12.5" r="1.8"/><circle cx="10" cy="17.5" r="1.8"/><circle cx="18.5" cy="17.5" r="1.8"/></g>
</svg>

<div class="lbl" style="left:693px;top:632px;letter-spacing:0">Look for</div>
<div class="a" style="left:738px;top:627px;width:27px;height:20px;box-sizing:border-box;border:1px solid #9a978f;border-radius:3px;background:#fff"></div>
<div class="lbl" style="left:772px;top:632px;letter-spacing:0">in</div>
<div class="a" style="left:785px;top:627px;width:67px;height:20px;box-sizing:border-box;border:1px solid #9a978f;border-radius:3px;background:linear-gradient(#e2dfd8,#d2cec6)"></div>
<div class="a" style="left:835px;top:628px;width:1px;height:18px;background:#9a978f"></div>
<svg class="a" style="left:839px;top:633px" width="9" height="6" viewBox="0 0 9 6"><path d="M0.5 0.5 H8.5 L4.5 5 Z" fill="#000"/></svg>
<div class="btn" style="left:862px;top:626px;width:75px;height:23px;line-height:23px;border-color:#5f5d58;border-width:1px;"><span style="text-decoration:underline">S</span>earch</div>
<div class="chk" style="left:286px"></div><div class="lbl" style="left:303px;top:665px">Show selected only</div>
<div class="chk" style="left:410px"></div><div class="lbl" style="left:427px;top:665px">Search selected only</div>
<div class="chk" style="left:541px"></div><svg class="a" style="left:543px;top:666px" width="9" height="9" viewBox="0 0 9 9"><path d="M1.2 1.2 L7.8 7.8 M7.8 1.2 L1.2 7.8" stroke="#000" stroke-width="2"/></svg><div class="lbl" style="left:558px;top:665px">Case sensitive</div>
<div class="btn" style="left:664px;top:660px;width:93px;height:23px;line-height:22px">Advanced search</div>
<div class="btn" style="left:767px;top:660px;width:85px;height:23px;line-height:22px">?</div>
<div class="btn" style="left:862px;top:660px;width:75px;height:23px;line-height:22px">Close</div>
</body></html>
